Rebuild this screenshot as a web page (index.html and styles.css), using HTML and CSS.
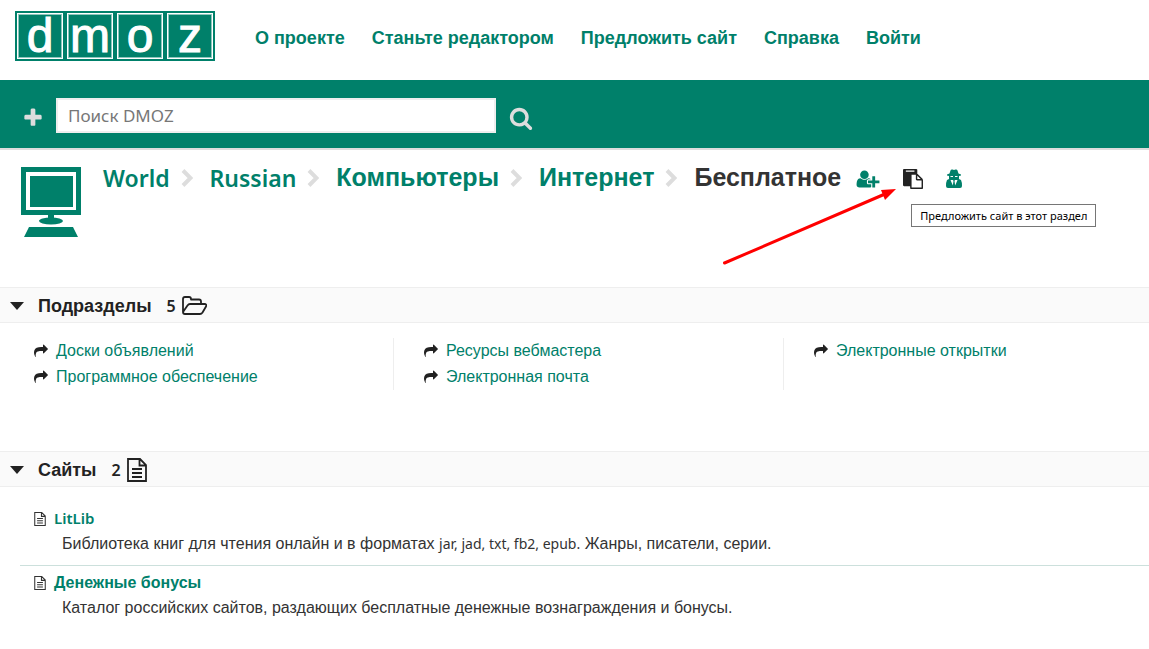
FILE: index.html
```
<!DOCTYPE html>
<html lang="ru">
  <head>
    <meta charset="UTF-8" />
    <meta name="viewport" content="width=device-width, initial-scale=1.0" />
    <title>DMOZ - Бесплатное</title>
    <link rel="stylesheet" href="styles.css">
  </head>
  <body>
    <svg class="sprite" aria-hidden="true">
      <symbol id="chevron" viewBox="0 0 12 18">
        <path d="M2 1.500L9.500 9L2 16.500" fill="none" stroke="currentColor" stroke-width="4" />
      </symbol>
      <symbol id="share" viewBox="0 0 1792 1792">
        <path fill="currentColor" d="M1792 640q0 26-19 45l-512 512q-19 19-45 19t-45-19-19-45v-256h-224q-98 0-175.500 6t-154 21.500-133 42.500-105.500 69.500-80 101-48.500 138.500-17.500 181q0 55 5 123 0 6 2.500 23.500t2.500 26.500q0 15-8.500 25t-23.500 10q-16 0-28-17-7-9-13-22t-13.500-30-10.500-24q-127-285-127-451 0-199 53-333 162-403 875-403h224v-256q0-26 19-45t45-19 45 19l512 512q19 19 19 45z" />
      </symbol>
      <symbol id="file" viewBox="0 0 20 24">
        <path d="M1 1h12l6 6v16H1zM12.500 1v6.500H19M5 11h10M5 15h10M5 19h10" fill="none" stroke="currentColor" stroke-width="1.800" />
      </symbol>
    </svg>

    <header class="header">
      <a class="logo" href="#" aria-label="dmoz">
        <span>d</span><span>m</span><span>o</span><span>z</span>
      </a>
      <nav class="nav">
        <a href="#">О проекте</a>
        <a href="#">Станьте редактором</a>
        <a href="#">Предложить сайт</a>
        <a href="#">Справка</a>
        <a href="#">Войти</a>
      </nav>
    </header>

    <form class="search">
      <button type="button" class="search-btn" aria-label="Расширенный поиск">
        <svg width="22" height="22" viewBox="0 0 1792 1792"><path fill="currentColor" d="M1600 736v192q0 40-28 68t-68 28h-416v416q0 40-28 68t-68 28h-192q-40 0-68-28t-28-68v-416h-416q-40 0-68-28t-28-68v-192q0-40 28-68t68-28h416v-416q0-40 28-68t68-28h192q40 0 68 28t28 68v416h416q40 0 68 28t28 68z" /></svg>
      </button>
      <input type="text" class="search-input" placeholder="Поиск DMOZ" aria-label="Поиск DMOZ" />
      <button type="submit" class="search-btn" aria-label="Найти">
        <svg width="24" height="24" viewBox="0 0 1792 1792"><path fill="currentColor" d="M1216 832q0-185-131.500-316.500t-316.500-131.500-316.500 131.500-131.500 316.500 131.500 316.500 316.500 131.500 316.500-131.500 131.500-316.500zm512 832q0 52-38 90t-90 38q-54 0-90-38l-343-342q-179 124-399 124-143 0-273.500-55.500t-225-150-150-225-55.500-273.500 55.500-273.500 150-225 225-150 273.500-55.500 273.500 55.500 225 150 150 225 55.500 273.500q0 220-124 399l343 343q37 37 37 90z" /></svg>
      </button>
    </form>

    <main>
      <div class="category">
        <svg class="category-icon" width="61" height="70" viewBox="0 0 61 70">
          <path fill="currentColor" fill-rule="evenodd" d="M0 0h60v48H0zM5 5v38h50V5z" />
          <path fill="currentColor" d="M9 9h43v31H9zM27 47h6v5h-6zM8 60h44l5 10H3z" />
          <ellipse cx="30" cy="54" rx="12" ry="3.500" fill="currentColor" />
        </svg>
        <div class="crumbs">
          <a class="latin" href="#">World</a>
          <svg class="chevron" width="12" height="18"><use href="#chevron" /></svg>
          <a class="latin" href="#">Russian</a>
          <svg class="chevron" width="12" height="18"><use href="#chevron" /></svg>
          <a href="#">Компьютеры</a>
          <svg class="chevron" width="12" height="18"><use href="#chevron" /></svg>
          <a href="#">Интернет</a>
          <svg class="chevron" width="12" height="18"><use href="#chevron" /></svg>
          <h1>Бесплатное</h1>
          <div class="actions">
            <a href="#" aria-label="Стать редактором">
              <svg width="24" height="20" viewBox="0 0 2048 1792"><path fill="currentColor" d="M704 896q-159 0-271.500-112.500t-112.500-271.500 112.500-271.500 271.500-112.500 271.500 112.500 112.500 271.500-112.500 271.500-271.500 112.500zm960 128h352q13 0 22.500 9.500t9.500 22.500v192q0 13-9.500 22.500t-22.500 9.500h-352v352q0 13-9.500 22.500t-22.500 9.500h-192q-13 0-22.500-9.500t-9.500-22.500v-352h-352q-13 0-22.500-9.500t-9.500-22.500v-192q0-13 9.500-22.500t22.500-9.500h352v-352q0-13 9.500-22.500t22.500-9.500h192q13 0 22.500 9.500t9.500 22.500v352zm-736 224q0 52 38 90t90 38h256v238q-68 50-171 50h-874q-121 0-194-69t-73-190q0-53 3.500-103.500t14-109 26.500-108.500 43-97.500 62-81 85.500-53.500 111.500-20q19 0 39 17 79 61 154.500 91.500t164.500 30.500 164.500-30.500 154.500-91.500q20-17 39-17 132 0 217 96h-223q-52 0-90 38t-38 90v192z" /></svg>
            </a>
            <a class="suggest" href="#" aria-label="Предложить сайт">
              <svg width="20" height="20" viewBox="0 0 1792 1792"><path fill="currentColor" d="M768 1664h896v-640h-416q-40 0-68-28t-28-68v-416h-384v1152zm256-1440v-64q0-13-9.500-22.500t-22.500-9.500h-704q-13 0-22.500 9.500t-9.500 22.500v64q0 13 9.500 22.500t22.500 9.500h704q13 0 22.500-9.500t9.500-22.500zm256 672h299l-299-299v299zm512 128v672q0 40-28 68t-68 28h-960q-40 0-68-28t-28-68v-160h-544q-40 0-68-28t-28-68v-1344q0-40 28-68t68-28h1088q40 0 68 28t28 68v328q21 13 36 28l408 408q28 28 48 76t20 88z" /></svg>
              <span class="tooltip">Предложить сайт в этот раздел</span>
              <svg class="arrow" width="174" height="78" viewBox="0 0 174 78"><path d="M1.500 76L162 7" fill="none" stroke="#f00" stroke-width="3" stroke-linecap="round" /><path d="M173 2L158 3L162 13z" fill="#f00" /></svg>
            </a>
            <a href="#" aria-label="Войти как редактор">
              <svg width="16" height="20" viewBox="0 0 16 20">
                <path fill="currentColor" d="M3.500 4.500L4.500 1.500Q5 0 6.500 .5L8 1L9.500 .5Q11 0 11.500 1.500L12.500 4.500L15 5.500V6.500L13 7V10L15 11Q16 13 16 17Q16 19 14 19H2Q0 19 0 17Q0 13 1 11L3 10V7L1 6.500V5.500z" />
                <path fill="none" stroke="#fff" d="M4.500 7.500h2.500M9 7.500h2.500" />
                <path fill="#fff" d="M4.500 11H7L7.500 12L6.800 16.500zM11.500 11H9L8.500 12L9.200 16.500z" />
              </svg>
            </a>
          </div>
        </div>
      </div>

      <section class="subcategories">
        <h2 class="bar">
          <span class="caret"></span>Подразделы
          <span class="count latin">5</span>
          <svg width="25" height="20" viewBox="0 0 25 20"><path d="M1 16V3Q1 1 3 1H7Q9 1 9 3V3.500H17Q19 3.500 19 5.500V8M1 16Q1 18 3 18H18Q19.500 18 20.500 16.500L24 10.500Q25 8 22.500 8H8Q6.500 8 5.500 9.500L1 16" fill="none" stroke="currentColor" stroke-width="1.800" stroke-linejoin="round" /></svg>
        </h2>
        <ul class="sub-list">
          <li><svg width="14" height="14"><use href="#share" /></svg><a href="#">Доски объявлений</a></li>
          <li><svg width="14" height="14"><use href="#share" /></svg><a href="#">Программное обеспечение</a></li>
          <li><svg width="14" height="14"><use href="#share" /></svg><a href="#">Ресурсы вебмастера</a></li>
          <li><svg width="14" height="14"><use href="#share" /></svg><a href="#">Электронная почта</a></li>
          <li><svg width="14" height="14"><use href="#share" /></svg><a href="#">Электронные открытки</a></li>
        </ul>
      </section>

      <section>
        <h2 class="bar">
          <span class="caret"></span>Сайты
          <span class="count latin">2</span>
          <svg width="20" height="24"><use href="#file" /></svg>
        </h2>
        <div class="sites">
          <article class="site">
            <h3><svg width="12" height="14"><use href="#file" /></svg><a class="latin" href="#">LitLib</a></h3>
            <p>Библиотека книг для чтения онлайн и в форматах <span class="latin">jar, jad, txt, fb2, epub.</span> Жанры, писатели, серии.</p>
          </article>
          <article class="site">
            <h3><svg width="12" height="14"><use href="#file" /></svg><a href="#">Денежные бонусы</a></h3>
            <p>Каталог российских сайтов, раздающих бесплатные денежные вознаграждения и бонусы.</p>
          </article>
        </div>
      </section>
    </main>
  </body>
</html>
```
FILE: styles.css
```
/* General */
* {
  box-sizing: border-box;
}

body {
  margin: 0;
  font-family: "Liberation Sans", Arial, sans-serif;
  font-size: 16px;
  color: #333;
  background-color: #fff;
}

a {
  color: #00806a;
  text-decoration: none;
}

svg {
  display: block;
  flex-shrink: 0;
}

.sprite {
  position: absolute;
  width: 0;
  height: 0;
}

/* Header */
.header {
  display: flex;
  align-items: center;
  gap: 40px;
  height: 80px;
  padding: 0 15px 8px;
}

.logo {
  display: flex;
  gap: 4px;
  width: 200px;
  height: 50px;
  padding: 2px;
  background-color: #00806a;
}

.logo span {
  flex: 1 1 0;
  display: flex;
  justify-content: center;
  min-width: 0;
  border: 1px solid #fff;
  outline: 1px solid #8cc6bc;
  outline-offset: -2px;
  color: #fff;
  font-size: 48px;
  line-height: 44px;
  -webkit-text-stroke: 1px #fff;
}

.nav {
  display: flex;
  gap: 27px;
  padding-top: 4px;
  font-size: 18px;
  font-weight: bold;
}

/* Search */
.search {
  display: flex;
  align-items: center;
  height: 70px;
  padding: 2px 22px 0;
  background-color: #00806a;
  border-bottom: 2px solid #ddd;
}

.search-btn {
  padding: 6px 0 0;
  border: none;
  background: none;
  color: #ddd;
  cursor: pointer;
}

.search-input {
  width: 440px;
  height: 35px;
  margin: 0 13px 0 12px;
  padding: 0 10px;
  border: 2px solid #eee;
  background-color: #fff;
  font-family: "Noto Sans", sans-serif;
  font-size: 17px;
}

.search-input::placeholder {
  color: #777;
}

/* Category path */
.category {
  display: flex;
  gap: 21px;
  height: 137px;
  padding: 10px 21px;
}

.category-icon {
  margin-top: 7px;
  color: #00806a;
}

.crumbs {
  display: flex;
  align-items: center;
  height: 35px;
  font-size: 25px;
  font-weight: bold;
}

.crumbs h1 {
  margin: 0;
  font-size: 25px;
}

.crumbs .latin {
  font-size: 23px;
  font-weight: 600;
  line-height: 28px;
}

.latin {
  font-family: "Noto Sans", sans-serif;
}

.chevron {
  margin: 0 17px 0 11px;
  color: #ddd;
}

.actions {
  display: flex;
  gap: 23px;
  margin-left: 15px;
  padding-top: 2px;
}

.suggest {
  position: relative;
  color: #222;
}

.tooltip {
  position: absolute;
  top: 35px;
  left: 8px;
  padding: 3px 8px;
  border: 1px solid #767676;
  background-color: #fff;
  color: #000;
  font-family: "Noto Sans", sans-serif;
  font-size: 11px;
  font-weight: normal;
  line-height: 15px;
  white-space: nowrap;
}

.arrow {
  position: absolute;
  top: 18px;
  right: 26px;
}

/* Sections */
.bar {
  display: flex;
  align-items: center;
  height: 36px;
  margin: 0;
  padding: 2px 10px 0;
  border-top: 1px solid #eee;
  border-bottom: 1px solid #eee;
  background-color: #fafafa;
  color: #222;
  font-size: 18px;
}

.caret {
  margin-right: 14px;
  border: 7px solid transparent;
  border-top: 8px solid #222;
  border-bottom: none;
}

.count {
  margin: 0 6px 0 15px;
  font-size: 16px;
  font-weight: 600;
}

.subcategories {
  min-height: 164px;
}

.sub-list {
  columns: 3;
  column-gap: 62px;
  column-rule: 1px solid #eee;
  margin: 0;
  padding: 15px 7px 0 34px;
  list-style: none;
}

.sub-list li {
  display: flex;
  align-items: center;
  gap: 8px;
  height: 26px;
  color: #222;
  break-inside: avoid;
}

/* Sites */
.sites {
  padding: 15px 0 0 20px;
}

.site {
  padding: 4px 14px 8px;
}

.site + .site {
  border-top: 1px solid #cce0dc;
}

.site h3 {
  display: flex;
  align-items: center;
  gap: 8px;
  margin: 0;
  font-size: 16px;
  line-height: 25px;
}

.site h3 .latin {
  font-size: 15px;
  font-weight: 600;
}

.site p {
  margin: 0;
  padding-left: 28px;
  line-height: 26px;
}

.site p .latin {
  font-size: 14px;
}
```
